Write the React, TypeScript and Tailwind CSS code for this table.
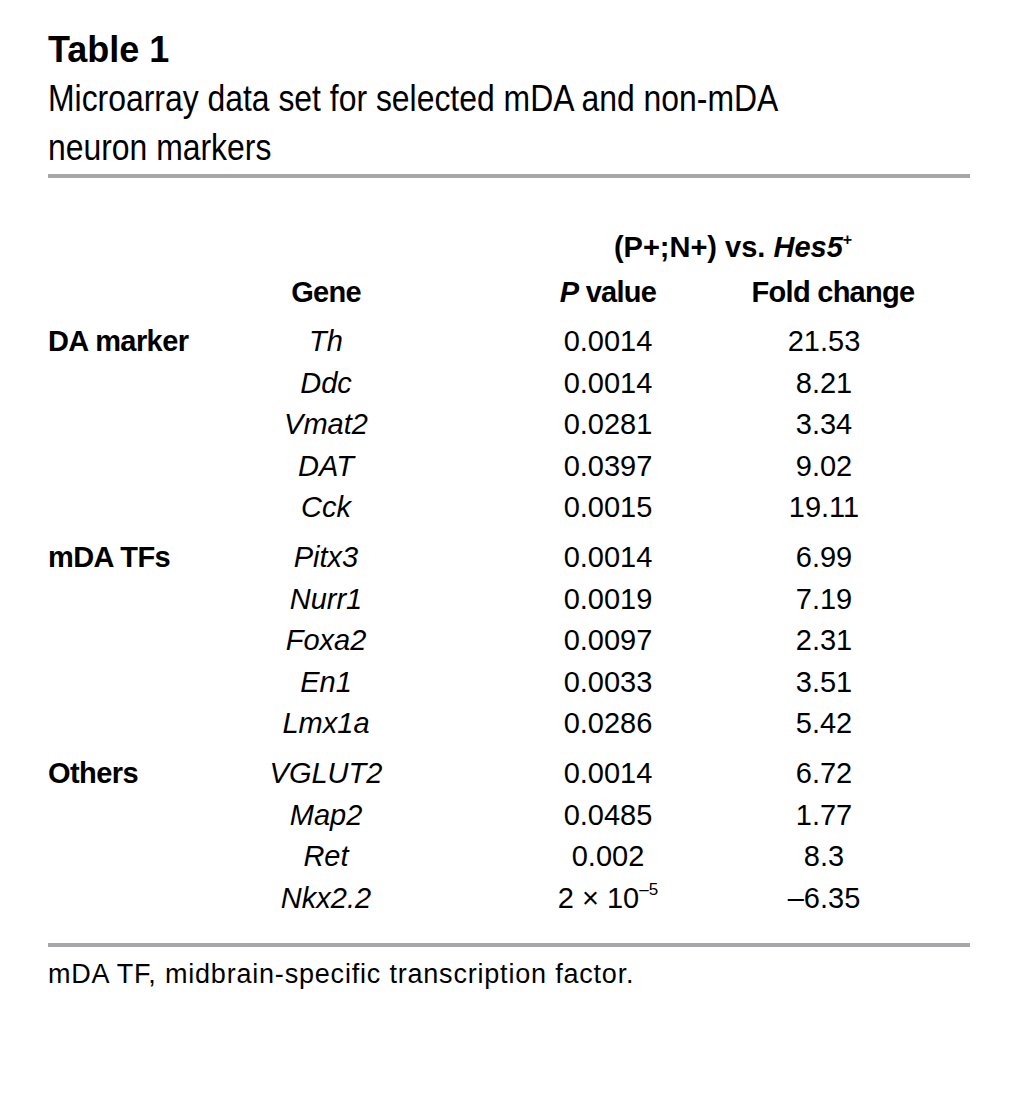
const rows: { group?: string; gene: string; p: React.ReactNode; fold: string }[] = [
  { group: "DA marker", gene: "Th", p: "0.0014", fold: "21.53" },
  { gene: "Ddc", p: "0.0014", fold: "8.21" },
  { gene: "Vmat2", p: "0.0281", fold: "3.34" },
  { gene: "DAT", p: "0.0397", fold: "9.02" },
  { gene: "Cck", p: "0.0015", fold: "19.11" },
  { group: "mDA TFs", gene: "Pitx3", p: "0.0014", fold: "6.99" },
  { gene: "Nurr1", p: "0.0019", fold: "7.19" },
  { gene: "Foxa2", p: "0.0097", fold: "2.31" },
  { gene: "En1", p: "0.0033", fold: "3.51" },
  { gene: "Lmx1a", p: "0.0286", fold: "5.42" },
  { group: "Others", gene: "VGLUT2", p: "0.0014", fold: "6.72" },
  { gene: "Map2", p: "0.0485", fold: "1.77" },
  { gene: "Ret", p: "0.002", fold: "8.3" },
  {
    gene: "Nkx2.2",
    p: (
      <>
        2 × 10<sup className="relative -top-[2px] align-super text-[17px] leading-none">–5</sup>
      </>
    ),
    fold: "–6.35",
  },
];

const grid = "grid grid-cols-[200px_156px_312px_216px]";

export default function App() {
  return (
    <div className="min-h-[1097px] w-[1018px] bg-white px-[48px] pt-[28px] text-black font-['Liberation_Sans',Arial,sans-serif]">
      {/* Caption */}
      <h1 className="text-[36px] font-bold leading-[44px]">Table 1</h1>
      <p className="mt-[2px] origin-left scale-x-[0.862] whitespace-nowrap text-[37px] leading-[49px]">
        Microarray data set for selected mDA and non-mDA
        <br />
        neuron markers
      </p>
      <div className="mt-[2px] h-[4px] w-[922px] bg-[#a7a7a9]" />

      {/* Table */}
      <div className="mt-[48px] text-[29px] leading-[42px]">
        <div className={grid}>
          <div className="col-start-3 col-span-2 pl-[130px] text-center font-bold">
            (P+;N+) vs. <i>Hes5</i>
            <sup className="relative -top-[1px] align-super text-[16px] leading-none font-bold">+</sup>
          </div>
        </div>
        <div className={`${grid} mt-[3px] font-bold tracking-tight`}>
          <div />
          <div className="text-center">Gene</div>
          <div className="pl-[96px] text-center">
            <i>P</i> value
          </div>
          <div className="pl-[18px] text-center">Fold change</div>
        </div>

        <div className="mt-[8px]">
          {rows.map((r, i) => (
            <div
              key={r.gene}
              className={`${grid} leading-[41.6px] ${r.group && i > 0 ? "mt-[8px]" : ""}`}
            >
              <div className="font-bold tracking-[-0.02em]">{r.group ?? ""}</div>
              <div className="text-center italic">{r.gene}</div>
              <div className="pl-[96px] text-center">{r.p}</div>
              <div className="text-center">{r.fold}</div>
            </div>
          ))}
        </div>
      </div>

      <div className="mt-[24px] h-[4px] w-[922px] bg-[#a7a7a9]" />
      <p className="mt-[11px] text-[27px] leading-[32px] tracking-[0.8px]">
        mDA TF, midbrain-specific transcription factor.
      </p>
    </div>
  );
}
